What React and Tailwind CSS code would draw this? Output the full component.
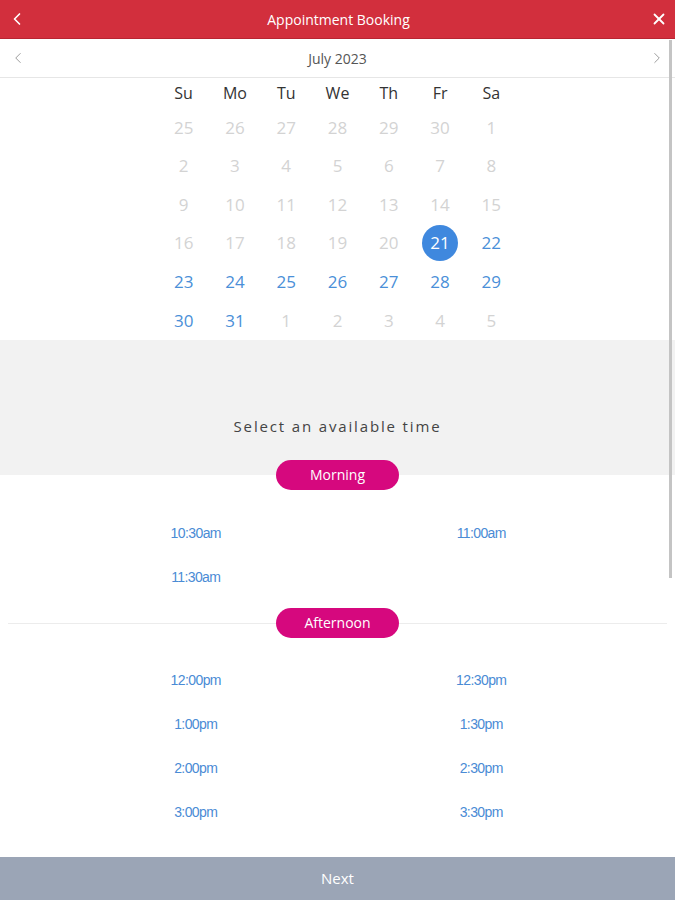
import { ChevronLeft, ChevronRight, X } from "lucide-react";

const DAYS = ["Su", "Mo", "Tu", "We", "Th", "Fr", "Sa"];

// [label, state] : "off" = greyed out, "on" = available, "sel" = selected
const WEEKS = [
  [["25", "off"], ["26", "off"], ["27", "off"], ["28", "off"], ["29", "off"], ["30", "off"], ["1", "off"]],
  [["2", "off"], ["3", "off"], ["4", "off"], ["5", "off"], ["6", "off"], ["7", "off"], ["8", "off"]],
  [["9", "off"], ["10", "off"], ["11", "off"], ["12", "off"], ["13", "off"], ["14", "off"], ["15", "off"]],
  [["16", "off"], ["17", "off"], ["18", "off"], ["19", "off"], ["20", "off"], ["21", "sel"], ["22", "on"]],
  [["23", "on"], ["24", "on"], ["25", "on"], ["26", "on"], ["27", "on"], ["28", "on"], ["29", "on"]],
  [["30", "on"], ["31", "on"], ["1", "off"], ["2", "off"], ["3", "off"], ["4", "off"], ["5", "off"]],
];

const MORNING = ["10:30am", "11:00am", "11:30am"];
const AFTERNOON = ["12:00pm", "12:30pm", "1:00pm", "1:30pm", "2:00pm", "2:30pm", "3:00pm", "3:30pm"];

function Pill({ children }) {
  return (
    <span className="inline-flex h-[30px] w-[123px] items-center justify-center rounded-full bg-[#d6087e] text-[14px] text-white">
      {children}
    </span>
  );
}

function Slots({ times }) {
  return (
    <div className="grid grid-cols-2 px-[53px] pr-[51px]">
      {times.map((t) => (
        <button
          key={t}
          className="flex h-[44px] items-center justify-center text-[14px] tracking-[-0.6px] text-[#4a8bd5]"
          style={{ fontFamily: '"Liberation Sans", Arial, sans-serif' }}
        >
          {t}
        </button>
      ))}
    </div>
  );
}

export default function App() {
  return (
    <div className="relative flex h-[900px] w-[675px] flex-col overflow-hidden bg-white" style={{ fontFamily: '"Open Sans", sans-serif' }}>
      <header className="flex h-[39px] items-center justify-between border-b border-[#b82532] bg-[#d22f3d] px-[7px] text-white">
        <ChevronLeft className="h-[20px] w-[20px]" strokeWidth={2} />
        <h1 className="text-[14px]">Appointment Booking</h1>
        <X className="h-[18px] w-[18px]" strokeWidth={2.4} />
      </header>

      <div className="flex h-[39px] items-center justify-between border-b border-[#e6e6e6] px-[9px] text-[#9a9a9a]">
        <ChevronLeft className="h-[18px] w-[18px]" strokeWidth={1.3} />
        <span className="text-[14px] text-[#555]">July 2023</span>
        <ChevronRight className="h-[18px] w-[18px]" strokeWidth={1.3} />
      </div>

      <div className="mx-auto w-[359px]">
        <div className="grid h-[30px] grid-cols-7 items-center">
          {DAYS.map((d) => (
            <span key={d} className="text-center text-[16px] text-[#333]">{d}</span>
          ))}
        </div>
        {WEEKS.map((week, i) => (
          <div key={i} className="grid h-[38.6px] grid-cols-7 items-center">
            {week.map(([n, s], j) => (
              <div key={j} className="flex items-center justify-center">
                {s === "sel" ? (
                  <span className="flex h-[36px] w-[36px] items-center justify-center rounded-full bg-[#3f88de] text-[17px] text-white">{n}</span>
                ) : (
                  <span className={`text-[17px] ${s === "on" ? "text-[#4a8fd8]" : "text-[#d3d3d3]"}`}>{n}</span>
                )}
              </div>
            ))}
          </div>
        ))}
      </div>

      <div className="flex h-[135px] flex-col items-center justify-end bg-[#f2f2f2] pb-[37px]">
        <p className="text-[15px] tracking-[1.85px] text-[#444]">Select an available time</p>
      </div>
      <div className="relative -mt-[15px] flex justify-center">
        <Pill>Morning</Pill>
      </div>

      <div className="mt-[22px]">
        <Slots times={MORNING} />
      </div>

      <div className="relative mt-[8px] flex justify-center">
        <div className="absolute left-[8px] right-[8px] top-[15px] h-px bg-[#ececec]" />
        <div className="relative">
          <Pill>Afternoon</Pill>
        </div>
      </div>

      <div className="mt-[21px]">
        <Slots times={AFTERNOON} />
      </div>

      <button className="mt-auto flex h-[43px] items-center justify-center bg-[#9ba5b6] text-[15px] text-white">
        Next
      </button>

      <div className="absolute right-[3px] top-[40px] h-[538px] w-[3px] bg-[#c4c4c4]" />
    </div>
  );
}
